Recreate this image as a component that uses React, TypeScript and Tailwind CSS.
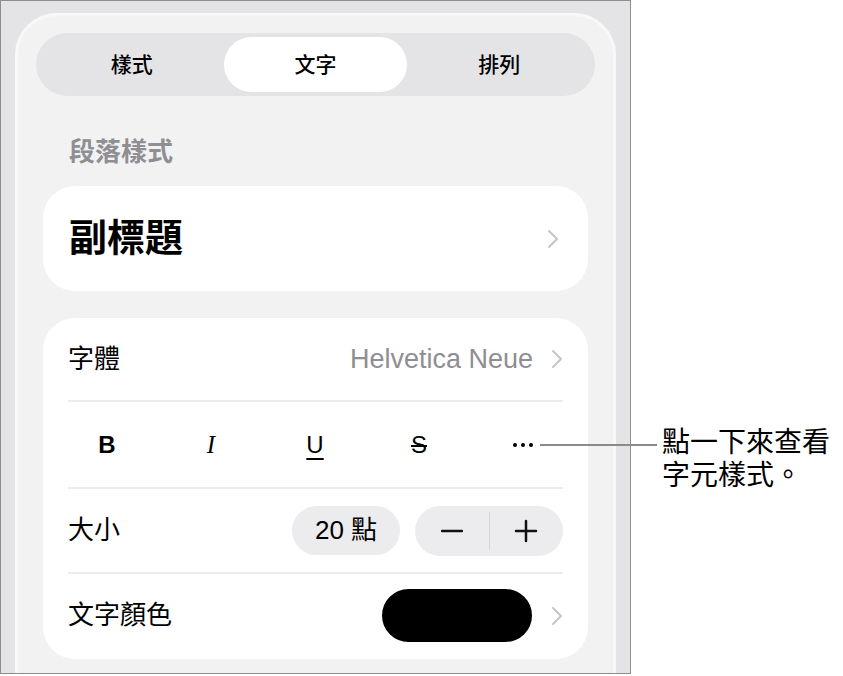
import React from "react";

const font = { fontFamily: '"Liberation Sans", "Noto Sans CJK TC", sans-serif' };

function Chevron() {
  return (
    <svg width="12" height="20" viewBox="0 0 12 20" fill="none" className="shrink-0">
      <path d="M2 2l8 8-8 8" stroke="#c5c5c8" strokeWidth="2" strokeLinecap="round" strokeLinejoin="round" />
    </svg>
  );
}

function Tabs() {
  const tabs = ["樣式", "文字", "排列"];
  return (
    <div className="grid grid-cols-3 h-[63px] rounded-full bg-[#e4e4e7] p-[4px]">
      {tabs.map((t) => (
        <div
          key={t}
          className={
            "flex items-center justify-center rounded-full text-[21px] font-medium text-black " +
            (t === "文字" ? "bg-white" : "")
          }
        >
          {t}
        </div>
      ))}
    </div>
  );
}

function StyleButtons() {
  return (
    <div className="grid grid-cols-5 w-[520px] h-[85px] -ml-[13px] items-center text-black">
      <div className="text-center text-[24px] font-bold">B</div>
      <div className="text-center text-[25px] italic" style={{ fontFamily: '"Liberation Serif", serif' }}>
        I
      </div>
      <div className="text-center text-[24px] underline underline-offset-[5px] decoration-[1.5px]">U</div>
      <div className="text-center text-[24px] line-through decoration-[1.5px]">S</div>
      <div className="flex justify-center gap-[4px]">
        <span className="w-[4px] h-[4px] rounded-full bg-black" />
        <span className="w-[4px] h-[4px] rounded-full bg-black" />
        <span className="w-[4px] h-[4px] rounded-full bg-black" />
      </div>
    </div>
  );
}

export default function App() {
  return (
    <div className="relative w-[843px] h-[676px] bg-white flex" style={font}>
      <div className="w-[631px] h-[674px] border border-[#8e8e8e] bg-[#e4e4e6] pt-[12px] px-[14px] overflow-hidden">
        <div className="h-[680px] rounded-t-[42px] border-[3px] border-[#f8f8f9] bg-[#f2f2f3] pt-[17px] px-[18px]">
          <Tabs />

          <div className="mt-[42px] pl-[33px] h-[28px] leading-[28px] text-[26px] font-semibold text-[#8e8e93]">
            段落樣式
          </div>

          <div className="mx-[7px] mt-[20px] h-[105px] rounded-[32px] bg-white flex items-center justify-between pl-[26px] pr-[29px]">
            <span className="text-[38px] font-bold text-black">副標題</span>
            <Chevron />
          </div>

          <div className="mx-[7px] mt-[27px] rounded-[32px] bg-white px-[25px] pb-[2px]">
            <div className="h-[84px] flex items-center justify-between border-b-2 border-[#ececee]">
              <span className="text-[26px] text-black">字體</span>
              <div className="flex items-center gap-[18px]">
                <span className="text-[27px] text-[#8e8e93]">Helvetica Neue</span>
                <Chevron />
              </div>
            </div>

            <div className="border-b-2 border-[#ececee]">
              <StyleButtons />
            </div>

            <div className="h-[85px] flex items-center justify-between border-b-2 border-[#ececee]">
              <span className="text-[26px] text-black">大小</span>
              <div className="flex items-center gap-[15px]">
                <div className="w-[108px] h-[49px] rounded-full bg-[#ececee] flex items-center justify-center text-[26px] text-black">
                  20 點
                </div>
                <div className="w-[148px] h-[50px] rounded-full bg-[#ececee] flex items-center">
                  <div className="flex-1 flex justify-center">
                    <svg width="22" height="22" viewBox="0 0 22 22">
                      <path d="M1 11h20" stroke="#111" strokeWidth="2.5" strokeLinecap="round" />
                    </svg>
                  </div>
                  <div className="w-px h-[38px] bg-[#d6d6d8]" />
                  <div className="flex-1 flex justify-center">
                    <svg width="24" height="24" viewBox="0 0 24 24">
                      <path d="M2 12h20M12 2v20" stroke="#111" strokeWidth="2.5" strokeLinecap="round" />
                    </svg>
                  </div>
                </div>
              </div>
            </div>

            <div className="h-[83px] flex items-center justify-between">
              <span className="text-[26px] text-black">文字顏色</span>
              <div className="flex items-center gap-[19px]">
                <div className="w-[150px] h-[53px] rounded-full bg-black" />
                <Chevron />
              </div>
            </div>
          </div>
        </div>
      </div>

      <div className="absolute left-[540px] top-[444px] w-[117px] h-[2px] bg-[#8a8a8a]" />
      <div className="absolute left-[662px] top-[426px] text-[28px] leading-[33px] text-black">
        點一下來查看
        <br />
        字元樣式。
      </div>
    </div>
  );
}
